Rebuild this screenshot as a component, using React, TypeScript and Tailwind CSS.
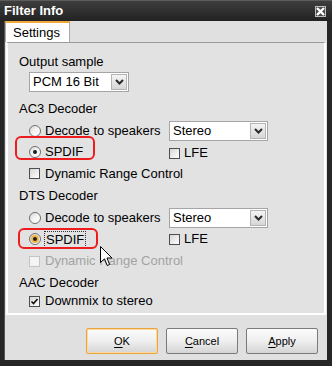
import React from "react";

const font = "font-['Liberation_Sans',Arial,sans-serif]";

const Radio = ({ checked = false, hover = false }: { checked?: boolean; hover?: boolean }) => (
  <span className="relative flex h-[12px] w-[12px] shrink-0 items-center justify-center rounded-full border border-[#6f6f6f] bg-gradient-to-br from-[#d8d8d8] via-[#f4f4f4] to-white">
    {hover && <span className="absolute inset-[1px] rounded-full border-2 border-[#f5b13d]" />}
    {checked && <span className="relative h-[4px] w-[4px] rounded-full bg-[#1a1a1a]" />}
  </span>
);

const Check = ({ checked = false, disabled = false }: { checked?: boolean; disabled?: boolean }) => (
  <span
    className={`flex h-[11px] w-[11px] shrink-0 items-center justify-center border ${
      disabled ? "border-[#c4c4c4] bg-[#f4f4f4]" : "border-[#4e4e4e] bg-gradient-to-br from-[#d6d6d6] to-white"
    }`}
  >
    {checked && (
      <svg width="9" height="9" viewBox="0 0 9 9">
        <path d="M1.5 4.5 L3.5 6.5 L7.5 2" fill="none" stroke="#111" strokeWidth="1.6" />
      </svg>
    )}
  </span>
);

const Select = ({ value, width }: { value: string; width: string }) => (
  <div className={`flex h-[20px] ${width} items-stretch border border-[#a5a5a5] bg-white`}>
    <span className="flex flex-1 items-center pl-[3px] text-[13px] text-black">{value}</span>
    <span className="m-[1px] flex w-[16px] items-center justify-center border border-[#b4b4b4] bg-gradient-to-b from-[#f4f4f4] to-[#d6d6d6]">
      <svg width="9" height="6" viewBox="0 0 9 6">
        <path d="M1 1 L4.5 4.5 L8 1" fill="none" stroke="#2a2a2a" strokeWidth="2" />
      </svg>
    </span>
  </div>
);

const Button = ({ first, rest, primary = false }: { first: string; rest: string; primary?: boolean }) => (
  <button
    className={`flex h-[26px] w-[72px] items-center justify-center rounded-[2px] border bg-gradient-to-b from-[#fbfbfb] via-[#efefef] to-[#d4d4d4] text-[11px] text-black ${
      primary ? "border-[#e9a43e] shadow-[inset_0_0_0_1px_#fbd9a0]" : "border-[#7a7a7a]"
    }`}
  >
    <span className="underline underline-offset-2">{first}</span>
    {rest}
  </button>
);

export default function App() {
  return (
    <div className={`relative flex h-[366px] w-[332px] flex-col bg-[#262626] ${font}`}>
      {/* title bar */}
      <div className="flex h-[21px] items-center justify-between border-t border-[#5c5c5c] bg-gradient-to-b from-[#3e3e3e] to-[#222] pl-[4px] pr-[6px]">
        <span className="text-[13px] font-bold text-white">Filter Info</span>
        <span className="flex h-[11px] w-[11px] items-center justify-center border border-[#bdbdbd] bg-[#4a4a4a]">
          <svg width="9" height="9" viewBox="0 0 9 9">
            <path d="M1 1 L8 8 M8 1 L1 8" stroke="white" strokeWidth="2.4" />
          </svg>
        </span>
      </div>

      {/* client */}
      <div className="mb-[6px] ml-[4px] mr-[5px] flex flex-1 flex-col border-l border-[#555] bg-[#e0e0e0]">
        <div className="flex">
          <div className="flex h-[21px] w-[65px] items-center border-x border-t-2 border-x-[#a8a8a8] border-t-[#f0a93a] bg-white pl-[7px] text-[13px] text-black">
            Settings
          </div>
        </div>

        <div className="mx-[1px] flex h-[273px] flex-col border-2 border-t border-white border-t-[#9c9c9c] bg-[#e2e2e2] pl-[11px] text-[13px] text-black">
          <div className="h-[10px]" />
          <div className="flex h-[17px] items-center">Output sample</div>
          <div className="ml-[10px] mt-[2px] flex">
            <Select value="PCM 16 Bit" width="w-[100px]" />
          </div>
          <div className="mt-[8px] flex h-[17px] items-center">AC3 Decoder</div>

          <div className="mt-[4px] flex h-[20px] items-center">
            <div className="ml-[10px] flex w-[140px] items-center gap-[4px]">
              <Radio />
              <span>Decode to speakers</span>
            </div>
            <Select value="Stereo" width="w-[99px]" />
          </div>

          <div className="relative flex h-[22px] items-center">
            <span className="absolute left-[-4px] top-[-5px] h-[24px] w-[80px] rounded-[6px] border-2 border-[#ee1c1c]" />
            <div className="ml-[10px] flex w-[140px] items-center gap-[4px]">
              <Radio checked />
              <span>SPDIF</span>
            </div>
            <div className="mt-[2px] flex items-center gap-[4px]">
              <Check />
              <span>LFE</span>
            </div>
          </div>

          <div className="ml-[10px] flex h-[21px] items-center gap-[5px]">
            <Check />
            <span>Dynamic Range Control</span>
          </div>

          <div className="mt-[1px] flex h-[21px] items-center">DTS Decoder</div>

          <div className="mt-[2px] flex h-[20px] items-center">
            <div className="ml-[10px] flex w-[140px] items-center gap-[4px]">
              <Radio />
              <span>Decode to speakers</span>
            </div>
            <Select value="Stereo" width="w-[99px]" />
          </div>

          <div className="relative flex h-[22px] items-center">
            <span className="absolute left-[-1px] top-[0px] h-[21px] w-[80px] rounded-[6px] border-2 border-[#ee1c1c]" />
            <div className="ml-[10px] flex w-[140px] items-center gap-[3px]">
              <Radio checked hover />
              <span className="border border-dotted border-[#333] px-[1px] leading-[15px]">SPDIF</span>
            </div>
            <div className="flex items-center gap-[4px]">
              <Check />
              <span>LFE</span>
            </div>
          </div>

          <div className="ml-[10px] flex h-[22px] items-center gap-[5px] text-[#a3a3a3]">
            <Check disabled />
            <span>Dynamic Range Control</span>
          </div>

          <div className="flex h-[21px] items-center">AAC Decoder</div>

          <div className="ml-[10px] flex h-[16px] items-center gap-[5px]">
            <Check checked />
            <span>Downmix to stereo</span>
          </div>
        </div>

        <div className="mt-[13px] flex justify-end gap-[8px] pr-[9px]">
          <Button first="O" rest="K" primary />
          <Button first="C" rest="ancel" />
          <Button first="A" rest="pply" />
        </div>
      </div>

      {/* mouse pointer */}
      <svg className="absolute left-[100px] top-[246px]" width="13" height="21" viewBox="0 0 13 21">
        <path d="M0.5 0.5 L0.5 16.5 L4.5 12.8 L7.2 19.5 L9.6 18.5 L7 12 L12 12 Z" fill="white" stroke="black" strokeWidth="1" />
      </svg>
    </div>
  );
}
